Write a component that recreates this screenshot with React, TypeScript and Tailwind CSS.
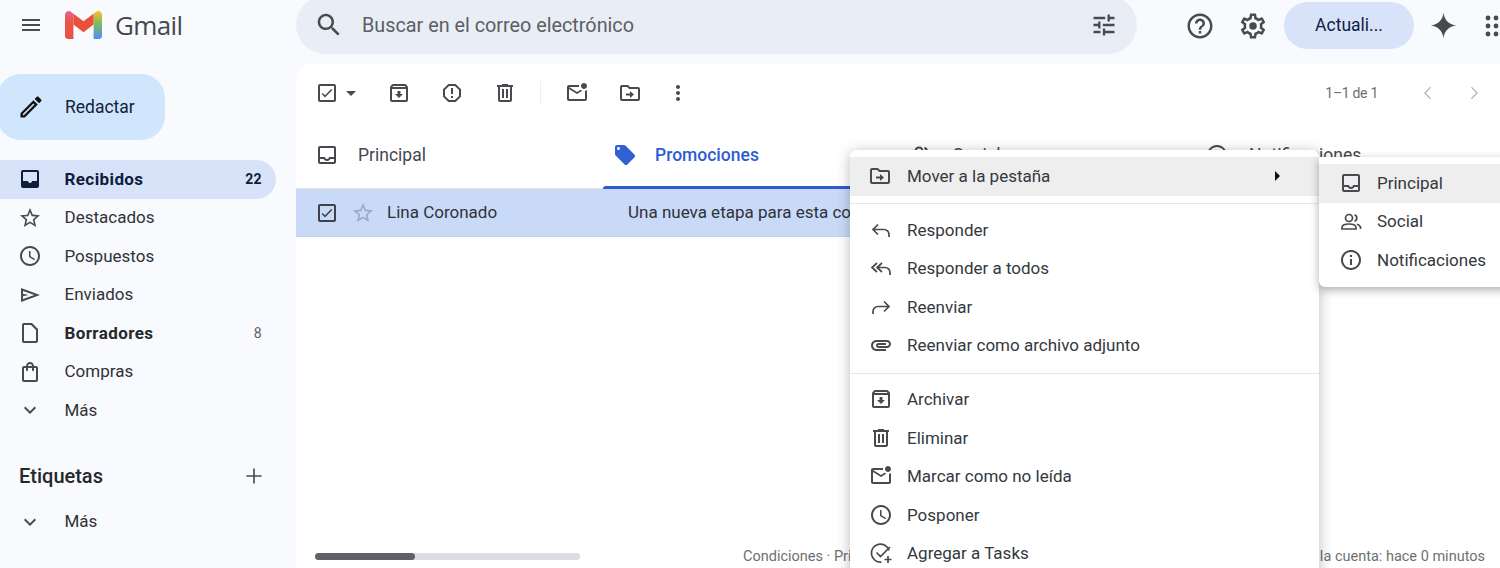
import React from 'react';

const P = {
  menu: 'M3 18h18v-2H3v2zm0-5h18v-2H3v2zm0-7v2h18V6H3z',
  search: 'M15.5 14h-.79l-.28-.27C15.41 12.59 16 11.11 16 9.5 16 5.91 13.09 3 9.5 3S3 5.91 3 9.5 5.91 16 9.5 16c1.61 0 3.09-.59 4.23-1.57l.27.28v.79l5 4.99L20.49 19l-4.99-5zm-6 0C7.01 14 5 11.99 5 9.5S7.01 5 9.5 5 14 7.01 14 9.5 11.99 14 9.5 14z',
  tune: 'M3 17v2h6v-2H3zM3 5v2h10V5H3zm10 16v-2h8v-2h-8v-2h-2v6h2zM7 9v2H3v2h4v2h2V9H7zm14 4v-2H11v2h10zm-6-4h2V7h4V5h-4V3h-2v6z',
  help: 'M11 18h2v-2h-2v2zm1-16C6.48 2 2 6.48 2 12s4.48 10 10 10 10-4.48 10-10S17.52 2 12 2zm0 18c-4.41 0-8-3.59-8-8s3.59-8 8-8 8 3.59 8 8-3.59 8-8 8zm0-14c-2.21 0-4 1.79-4 4h2c0-1.1.9-2 2-2s2 .9 2 2c0 2-3 1.75-3 5h2c0-2.25 3-2.5 3-5 0-2.21-1.79-4-4-4z',
  gear: 'M19.43 12.98c.04-.32.07-.64.07-.98 0-.34-.03-.66-.07-.98l2.11-1.65c.19-.15.24-.42.12-.64l-2-3.46c-.09-.16-.26-.25-.44-.25-.06 0-.12.01-.17.03l-2.49 1c-.52-.4-1.08-.73-1.69-.98l-.38-2.65C14.46 2.18 14.25 2 14 2h-4c-.25 0-.46.18-.49.42l-.38 2.65c-.61.25-1.17.59-1.69.98l-2.49-1c-.06-.02-.12-.03-.18-.03-.17 0-.34.09-.43.25l-2 3.46c-.13.22-.07.49.12.64l2.11 1.65c-.04.32-.07.65-.07.98 0 .33.03.66.07.98l-2.11 1.65c-.19.15-.24.42-.12.64l2 3.46c.09.16.26.25.44.25.06 0 .12-.01.17-.03l2.49-1c.52.4 1.08.73 1.69.98l.38 2.65c.03.24.24.42.49.42h4c.25 0 .46-.18.49-.42l.38-2.65c.61-.25 1.17-.59 1.69-.98l2.49 1c.06.02.12.03.18.03.17 0 .34-.09.43-.25l2-3.46c.12-.22.07-.49-.12-.64l-2.11-1.65zm-1.98-1.71c.04.31.05.52.05.73 0 .21-.02.43-.05.73l-.14 1.13.89.7 1.08.84-.7 1.21-1.27-.51-1.04-.42-.9.68c-.43.32-.84.56-1.25.73l-1.06.43-.16 1.13-.2 1.35h-1.4l-.19-1.35-.16-1.13-1.06-.43c-.43-.18-.83-.41-1.23-.71l-.91-.7-1.06.43-1.27.51-.7-1.21 1.08-.84.89-.7-.14-1.13c-.03-.31-.05-.54-.05-.74s.02-.43.05-.73l.14-1.13-.89-.7-1.08-.84.7-1.21 1.27.51 1.04.42.9-.68c.43-.32.84-.56 1.25-.73l1.06-.43.16-1.13.2-1.35h1.39l.19 1.35.16 1.13 1.06.43c.43.18.83.41 1.23.71l.91.7 1.06-.43 1.27-.51.7 1.21-1.07.85-.89.7.14 1.13zM12 9a3 3 0 1 0 0 6 3 3 0 0 0 0-6z',
  spark: 'M12 1.5c.7 6 4.5 9.800 10.500 10.500-6 .7-9.800 4.500-10.500 10.500-.7-6-4.500-9.800-10.500-10.500 6-.7 9.800-4.500 10.500-10.500z',
  pencil: 'M14.06 9.02l.92.92L5.92 19H5v-.92l9.06-9.06M17.66 3c-.25 0-.51.1-.7.29l-1.83 1.83 3.75 3.75 1.83-1.83c.39-.39.39-1.02 0-1.41l-2.34-2.34c-.2-.2-.45-.29-.71-.29zm-3.6 3.19L3 17.25V21h3.75L17.81 9.94l-3.75-3.75z',
  inboxFilled: 'M19 3H5c-1.1 0-2 .9-2 2v14c0 1.1.9 2 2 2h14c1.1 0 2-.9 2-2V5c0-1.1-.9-2-2-2zm0 11h-4.99c0 1.1-.9 2-2 2s-2-.9-2-2H5V5h14v9z',
  star: 'M22 9.24l-7.19-.62L12 2 9.19 8.63 2 9.24l5.46 4.73L5.82 21 12 17.27 18.18 21l-1.63-7.03L22 9.24zM12 15.4l-3.76 2.27 1-4.28-3.32-2.88 4.38-.38L12 6.1l1.71 4.04 4.38.38-3.32 2.88 1 4.28L12 15.4z',
  clock: 'M11.99 2C6.47 2 2 6.48 2 12s4.47 10 9.99 10C17.52 22 22 17.52 22 12S17.52 2 11.99 2zM12 20c-4.42 0-8-3.58-8-8s3.58-8 8-8 8 3.58 8 8-3.58 8-8 8zm.5-13H11v6l5.25 3.15.75-1.23-4.5-2.67z',
  send: 'M3 5v14l19-7L3 5zm2 2.900L16.300 12 5 16.100v-2.900l5.500-1.200L5 10.800V7.900z',
  draft: 'M14 2H6c-1.1 0-1.99.9-1.99 2L4 20c0 1.1.89 2 1.99 2H18c1.1 0 2-.9 2-2V8l-6-6zM6 20V4h7l5 5v11H6z',
  bag: 'M18 6h-2c0-2.21-1.79-4-4-4S8 3.79 8 6H6c-1.1 0-2 .9-2 2v12c0 1.1.9 2 2 2h12c1.1 0 2-.9 2-2V8c0-1.1-.9-2-2-2zm-6-2c1.1 0 2 .9 2 2h-4c0-1.1.9-2 2-2zm6 16H6V8h2v2c0 .55.45 1 1 1s1-.45 1-1V8h4v2c0 .55.45 1 1 1s1-.45 1-1V8h2v12z',
  chevron: 'M16.59 8.59L12 13.17 7.41 8.59 6 10l6 6 6-6z',
  plus: 'M19 12.750h-6.250V19h-1.500v-6.250H5v-1.500h6.250V5h1.500v6.250H19v1.500z',
  check: 'M19 3H5c-1.1 0-2 .9-2 2v14c0 1.1.9 2 2 2h14c1.1 0 2-.9 2-2V5c0-1.1-.9-2-2-2zm0 16H5V5h14v14zM17.3 9.100l-1.100-1.100-6.200 6.200-2.200-2.200-1.100 1.100 3.300 3.300z',
  archive: 'M20.54 5.23l-1.39-1.68C18.88 3.21 18.47 3 18 3H6c-.47 0-.88.21-1.16.55L3.46 5.23C3.17 5.57 3 6.02 3 6.5V19c0 1.1.9 2 2 2h14c1.1 0 2-.9 2-2V6.5c0-.48-.17-.93-.46-1.27zM6.24 5h11.52l.83 1H5.42l.82-1zM5 19V8h14v11H5zm8.45-9h-2.9v3H8l4 4 4-4h-2.55z',
  report: 'M15.73 3H8.27L3 8.27v7.46L8.27 21h7.46L21 15.73V8.27L15.73 3zM19 14.9L14.9 19H9.1L5 14.9V9.1L9.1 5h5.8L19 9.1v5.8zM11 7h2v6h-2zM11 15h2v2h-2z',
  trash: 'M15 4V3H9v1H4v2h1v13c0 1.1.9 2 2 2h10c1.1 0 2-.9 2-2V6h1V4h-5zm2 15H7V6h10v13zM9 8h2v9H9zm4 0h2v9h-2z',
  unread: 'M22 8.98V18c0 1.1-.9 2-2 2H4c-1.1 0-2-.9-2-2V6c0-1.1.9-2 2-2h10.1c-.06.32-.1.66-.1 1 0 .34.04.68.1 1H4l8 5 3.67-2.29c.47.43 1.02.76 1.63.98L12 13 4 8v10h16V9.9c.74-.15 1.42-.48 2-.92zM16 5c0 1.66 1.34 3 3 3s3-1.34 3-3-1.34-3-3-3-3 1.34-3 3z',
  move: 'M20 6h-8l-2-2H4c-1.1 0-2 .9-2 2v12c0 1.1.9 2 2 2h16c1.1 0 2-.9 2-2V8c0-1.1-.9-2-2-2zm0 12H4V6h5.17l2 2H20v10zm-8-8l4 3.500-4 3.500v-2.500H8v-2h4V10z',
  more: 'M12 8c1.1 0 2-.9 2-2s-.9-2-2-2-2 .9-2 2 .9 2 2 2zm0 2c-1.1 0-2 .9-2 2s.9 2 2 2 2-.9 2-2-.9-2-2-2zm0 6c-1.1 0-2 .9-2 2s.9 2 2 2 2-.9 2-2-.9-2-2-2z',
  inbox: 'M19 3H5c-1.1 0-2 .9-2 2v14c0 1.1.9 2 2 2h14c1.1 0 2-.9 2-2V5c0-1.1-.9-2-2-2zm0 16H5v-3h3.56c.69 1.19 1.97 2 3.45 2s2.75-.81 3.45-2H19v3zm0-5h-4.99c0 1.1-.9 2-2 2s-2-.9-2-2H5V5h14v9z',
  tag: 'M21.41 11.58l-9-9C12.05 2.22 11.55 2 11 2H4c-1.1 0-2 .9-2 2v7c0 .55.22 1.05.59 1.42l9 9c.36.36.86.58 1.41.58.55 0 1.05-.22 1.41-.59l7-7c.37-.36.59-.86.59-1.41 0-.55-.23-1.06-.59-1.42zM5.5 7C4.67 7 4 6.33 4 5.5S4.67 4 5.5 4 7 4.67 7 5.5 6.33 7 5.5 7z',
  attach: 'M2 12.5C2 9.46 4.46 7 7.5 7H18c2.21 0 4 1.79 4 4s-1.79 4-4 4H9.5C8.12 15 7 13.88 7 12.5S8.12 10 9.5 10H17v2H9.41c-.55 0-.55 1 0 1H18c1.1 0 2-.9 2-2s-.9-2-2-2H7.5C5.57 9 4 10.57 4 12.5S5.57 16 7.5 16H17v2H7.5C4.46 18 2 15.54 2 12.5z',
  info: 'M11 7h2v2h-2zm0 4h2v6h-2zm1-9C6.48 2 2 6.48 2 12s4.48 10 10 10 10-4.48 10-10S17.52 2 12 2zm0 18c-4.41 0-8-3.59-8-8s3.59-8 8-8 8 3.59 8 8-3.59 8-8 8z',
};

// thin arrows and other icons that read better as strokes
const S = {
  reply: 'M9 6.500L4 11.500l5 5M4 11.500h11a5 5 0 0 1 5 5V19',
  replyAll: 'M8 7l-5 4.500L8 16M13 7l-5 4.500 5 4.500M8 11.500h8a5 5 0 0 1 5 5V19',
  forward: 'M15 6.500l5 5-5 5M20 11.500H9a5 5 0 0 0-5 5V19',
  task: 'M20 9.500A9 9 0 1 0 12.500 21M7.500 11.500l4 4 9.500-9.500M19 15v7M15.500 18.500h7',
  people: 'M13.500 8a3.500 3.500 0 1 1-7 0 3.500 3.500 0 0 1 7 0zM3 19v-1.500c0-2.500 4-3.500 7-3.500s7 1 7 3.500V19zM15.500 4.700a3.500 3.500 0 0 1 0 6.600M18 14.200c2 .6 3.500 1.500 3.500 3.300V19',
};

function Ic({ d, size = 24, className = '' }: { d: string; size?: number; className?: string }) {
  return (
    <svg viewBox="0 0 24 24" width={size} height={size} className={`shrink-0 fill-current ${className}`}>
      <path d={d} />
    </svg>
  );
}

function Line({ d, size = 24, className = '' }: { d: string; size?: number; className?: string }) {
  return (
    <svg viewBox="0 0 24 24" width={size} height={size} className={`shrink-0 fill-none stroke-current stroke-2 ${className}`}>
      <path d={d} />
    </svg>
  );
}

function GmailLogo() {
  return (
    <svg viewBox="52 42 88 66" width="37" height="28" className="shrink-0">
      <defs>
        <linearGradient id="leftStem" x1="0" y1="0" x2="0" y2="1">
          <stop offset="0" stopColor="#e4668f" />
          <stop offset="0.35" stopColor="#e9564b" />
          <stop offset="1" stopColor="#e8533f" />
        </linearGradient>
        <linearGradient id="rightStem" x1="0" y1="0" x2="0" y2="1">
          <stop offset="0" stopColor="#f6bf2e" />
          <stop offset="0.45" stopColor="#7dbb5c" />
          <stop offset="1" stopColor="#4f8ff7" />
        </linearGradient>
      </defs>
      <path fill="url(#leftStem)" d="M52 51c0-7.420 8.460-11.650 14.400-7.200L72 48v60H58c-3.310 0-6-2.680-6-6V51z" />
      <path fill="url(#rightStem)" d="M140 51c0-7.420-8.470-11.650-14.400-7.200L120 48v60h14c3.320 0 6-2.690 6-6V51z" />
      <path fill="#ea4f3c" d="M72 74V48l24 18 24-18v26L96 92z" />
    </svg>
  );
}

const nav = [
  { label: 'Recibidos', icon: P.inboxFilled, count: '22', active: true },
  { label: 'Destacados', icon: P.star },
  { label: 'Pospuestos', icon: P.clock },
  { label: 'Enviados', icon: P.send },
  { label: 'Borradores', icon: P.draft, count: '8', bold: true },
  { label: 'Compras', icon: P.bag },
];

function Sidebar() {
  return (
    <aside className="w-[296px] shrink-0 pt-[10px]">
      <button className="-ml-[3px] flex h-[66px] w-[168px] items-center rounded-[24px] bg-[#cfe6fc] pl-[20px] text-[17.500px] text-[#16213a]">
        <Ic d={P.pencil} size={28} className="text-[#111]" />
        <span className="ml-[20px]">Redactar</span>
      </button>
      <nav className="mt-[20px] w-[276px]">
        {nav.map((item) => (
          <div
            key={item.label}
            className={`flex h-[38.500px] items-center pl-[18px] pr-[14px] text-[17px] ${
              item.active ? 'rounded-r-full bg-[#d8e3f9] font-bold tracking-[0.4px] text-[#0f1d3d]' : 'text-[#2f3237]'
            } ${item.bold ? 'font-bold tracking-[0.4px] text-[#26282c]' : ''}`}
          >
            <Ic d={item.icon} className={item.active ? 'text-[#0f1d3d]' : 'text-[#474a4f]'} />
            <span className="ml-[22.500px] flex-1">{item.label}</span>
            {item.count && (
              <span className={`text-[14px] ${item.active ? 'font-bold' : 'font-normal text-[#5c5f64]'}`}>{item.count}</span>
            )}
          </div>
        ))}
        <div className="flex h-[38.500px] items-center pl-[18px] text-[17px] text-[#2f3237]">
          <Ic d={P.chevron} className="text-[#474a4f]" />
          <span className="ml-[22.500px]">Más</span>
        </div>
      </nav>
      <div className="mt-[27px] flex h-[38px] w-[276px] items-center justify-between pl-[19px] pr-[9px] text-[20px] font-medium text-[#26282c]">
        <span>Etiquetas</span>
        <Ic d={P.plus} size={26} className="text-[#474a4f]" />
      </div>
      <div className="mt-[8px] flex h-[38.500px] items-center pl-[18px] text-[17px] text-[#2f3237]">
        <Ic d={P.chevron} className="text-[#474a4f]" />
        <span className="ml-[22.500px]">Más</span>
      </div>
    </aside>
  );
}

function Header() {
  return (
    <header className="mb-[14px] flex h-[50px] shrink-0 items-center">
      <div className="flex w-[296px] shrink-0 items-center pl-[19px]">
        <Ic d={P.menu} size={24} className="text-[#474a4f]" />
        <div className="ml-[22px]">
          <GmailLogo />
        </div>
        <span className="ml-[13px] mt-[1px] font-['Open_Sans',sans-serif] text-[26px] tracking-[-0.6px] text-[#45484d]">Gmail</span>
      </div>
      <div className="flex h-[58px] w-[841px] shrink-0 items-center rounded-full bg-[#e9eef6] pl-[18px] pr-[19px]">
        <Ic d={P.search} size={30} className="text-[#474a4f]" />
        <span className="ml-[18px] mt-[1px] flex-1 text-[19.800px] text-[#5b5e63]">Buscar en el correo electrónico</span>
        <Ic d={P.tune} size={28} className="text-[#474a4f]" />
      </div>
      <div className="ml-[48px] mt-[1px] flex items-center">
        <Ic d={P.help} size={30} className="text-[#474a4f]" />
        <Ic d={P.gear} size={30} className="ml-[23px] text-[#474a4f]" />
        <button className="ml-[16px] h-[47px] w-[130px] rounded-full bg-[#d8e3f9] text-[17.500px] text-[#0f1d3d]">Actuali...</button>
        <Ic d={P.spark} size={29} className="ml-[15px] text-[#474a4f]" />
        <svg viewBox="0 0 24 24" width="24" height="24" className="ml-[26px] shrink-0 fill-[#474a4f]">
          <circle cx="4" cy="4" r="2.400" /><circle cx="12" cy="4" r="2.400" /><circle cx="20" cy="4" r="2.400" />
          <circle cx="4" cy="12" r="2.400" /><circle cx="12" cy="12" r="2.400" /><circle cx="20" cy="12" r="2.400" />
          <circle cx="4" cy="20" r="2.400" /><circle cx="12" cy="20" r="2.400" /><circle cx="20" cy="20" r="2.400" />
        </svg>
      </div>
    </header>
  );
}

function Toolbar() {
  return (
    <div className="flex h-[58px] items-center pl-[19px] pr-[21px] text-[#474a4f]">
      <Ic d={P.check} />
      <svg viewBox="0 0 10 5" width="10" height="5" className="ml-[7px] fill-[#474a4f]"><path d="M0 0h10L5 5z" /></svg>
      <Ic d={P.archive} className="ml-[31px]" />
      <Ic d={P.report} className="ml-[29px]" />
      <Ic d={P.trash} className="ml-[29px]" />
      <div className="ml-[23px] h-[24px] w-px bg-[#eceef3]" />
      <Ic d={P.unread} className="ml-[24px]" />
      <Ic d={P.move} className="ml-[29px]" />
      <Ic d={P.more} className="ml-[24px]" />
      <span className="ml-auto text-[14px] tracking-[-0.3px] text-[#6c6f74]">1–1 de 1</span>
      <svg viewBox="0 0 10 16" width="9" height="14" className="ml-[45px] fill-none stroke-[#b4b7bb] stroke-[1.500]"><path d="M8.500 1.500L2 8l6.500 6.500" /></svg>
      <svg viewBox="0 0 10 16" width="9" height="14" className="ml-[38px] fill-none stroke-[#b4b7bb] stroke-[1.500]"><path d="M1.500 1.500L8 8l-6.500 6.500" /></svg>
    </div>
  );
}

function Tabs() {
  return (
    <div className="flex h-[67px] border-b border-[#e3e5e8] text-[17.500px] text-[#45484d]">
      <div className="flex w-[307px] items-center pl-[19px]">
        <Ic d={P.inbox} />
        <span className="ml-[19px] mt-[1px]">Principal</span>
      </div>
      <div className="relative flex w-[302px] items-center pl-[10px] font-medium text-[#2f5bd0]">
        <Ic d={P.tag} className="text-[#3160d3]" />
        <span className="ml-[18px] mt-[1px]">Promociones</span>
        <div className="absolute bottom-[-1px] left-0 right-0 h-[3px] rounded-t-[3px] bg-[#2f5bd0]" />
      </div>
      <div className="flex w-[293px] items-center pl-[4px]">
        <Line d={S.people} />
        <span className="ml-[20px] mt-[1px]">Social</span>
      </div>
      <div className="flex flex-1 items-center pl-[7px]">
        <Ic d={P.info} />
        <span className="ml-[20px] mt-[1px]">Notificaciones</span>
      </div>
    </div>
  );
}

function MessageRow() {
  return (
    <div className="flex h-[48px] items-center border-b border-[#bcd0f0] bg-[#c9daf9] pl-[19px] text-[17px] text-[#2f3237]">
      <Ic d={P.check} className="text-[#3f4246]" />
      <Ic d={P.star} className="ml-[12px] text-[#9aaac4]" />
      <span className="ml-[12px] mt-[1px] w-[241px]">Lina Coronado</span>
      <span className="mt-[1px]">Una nueva etapa para esta comunidad</span>
    </div>
  );
}

const menuGroups = [
  [
    { label: 'Responder', line: S.reply },
    { label: 'Responder a todos', line: S.replyAll },
    { label: 'Reenviar', line: S.forward },
    { label: 'Reenviar como archivo adjunto', icon: P.attach },
  ],
  [
    { label: 'Archivar', icon: P.archive },
    { label: 'Eliminar', icon: P.trash },
    { label: 'Marcar como no leída', icon: P.unread },
    { label: 'Posponer', icon: P.clock },
    { label: 'Agregar a Tasks', line: S.task },
  ],
];

function ContextMenu() {
  return (
    <div className="absolute left-[850px] top-[150px] h-[430px] w-[469px] rounded-t-[6px] bg-white pt-[7px] text-[17px] text-[#35383d] shadow-[0_2px_14px_rgba(0,0,0,0.28)]">
      <div className="flex h-[38.500px] items-center bg-[#eeeeee] pl-[18px] pr-[39px]">
        <Ic d={P.move} className="text-[#474a4f]" />
        <span className="ml-[15px] mt-[1px] flex-1">Mover a la pestaña</span>
        <svg viewBox="0 0 5 10" width="5" height="10" className="fill-[#111]"><path d="M0 0l5 5-5 5z" /></svg>
      </div>
      {menuGroups.map((group, i) => (
        <div key={i} className={`border-t border-[#e6e6e6] ${i === 0 ? 'mt-[7px] pt-[7px]' : 'mt-[8px] pt-[6.500px]'}`}>
          {group.map((item) => (
            <div key={item.label} className="flex h-[38.500px] items-center pl-[19px]">
              {item.icon ? <Ic d={item.icon} className="text-[#474a4f]" /> : <Line d={item.line as string} className="stroke-[1.700] text-[#474a4f]" />}
              <span className="ml-[14px] mt-[1px]">{item.label}</span>
            </div>
          ))}
        </div>
      ))}
    </div>
  );
}

function SubMenu() {
  return (
    <div className="absolute left-[1319px] top-[157px] h-[130px] w-[200px] rounded-bl-[6px] bg-white pt-[7px] text-[17px] text-[#35383d] shadow-[0_3px_10px_rgba(0,0,0,0.32)]">
      <div className="flex h-[38.500px] items-center bg-[#eeeeee] pl-[20px]">
        <Ic d={P.inbox} className="text-[#474a4f]" />
        <span className="ml-[14px]">Principal</span>
      </div>
      <div className="flex h-[38.500px] items-center pl-[20px]">
        <Line d={S.people} className="stroke-[1.700] text-[#474a4f]" />
        <span className="ml-[14px]">Social</span>
      </div>
      <div className="flex h-[38.500px] items-center pl-[20px]">
        <Ic d={P.info} className="text-[#474a4f]" />
        <span className="ml-[14px] mt-[1px]">Notificaciones</span>
      </div>
    </div>
  );
}

export default function App() {
  return (
    <div className="relative flex h-[568px] w-[1500px] flex-col overflow-hidden bg-[#f8fafd] font-['Roboto',sans-serif]">
      <Header />
      <div className="flex min-h-0 flex-1">
        <Sidebar />
        <main className="flex flex-1 flex-col rounded-tl-[16px] bg-white">
          <Toolbar />
          <Tabs />
          <MessageRow />
          <div className="mt-auto flex h-[24px] items-center pl-[19px] pr-[15px] text-[14.500px] text-[#6c6f74]">
            <div className="h-[7px] w-[265px] rounded-full bg-[#dcdde2]">
              <div className="h-[7px] w-[100px] rounded-full bg-[#5f6166]" />
            </div>
            <span className="ml-[163px] mt-[1px]">Condiciones · Privacidad</span>
            <span className="ml-auto mt-[1px]">Última actividad de la cuenta: hace 0 minutos</span>
          </div>
        </main>
      </div>
      <ContextMenu />
      <SubMenu />
    </div>
  );
}
